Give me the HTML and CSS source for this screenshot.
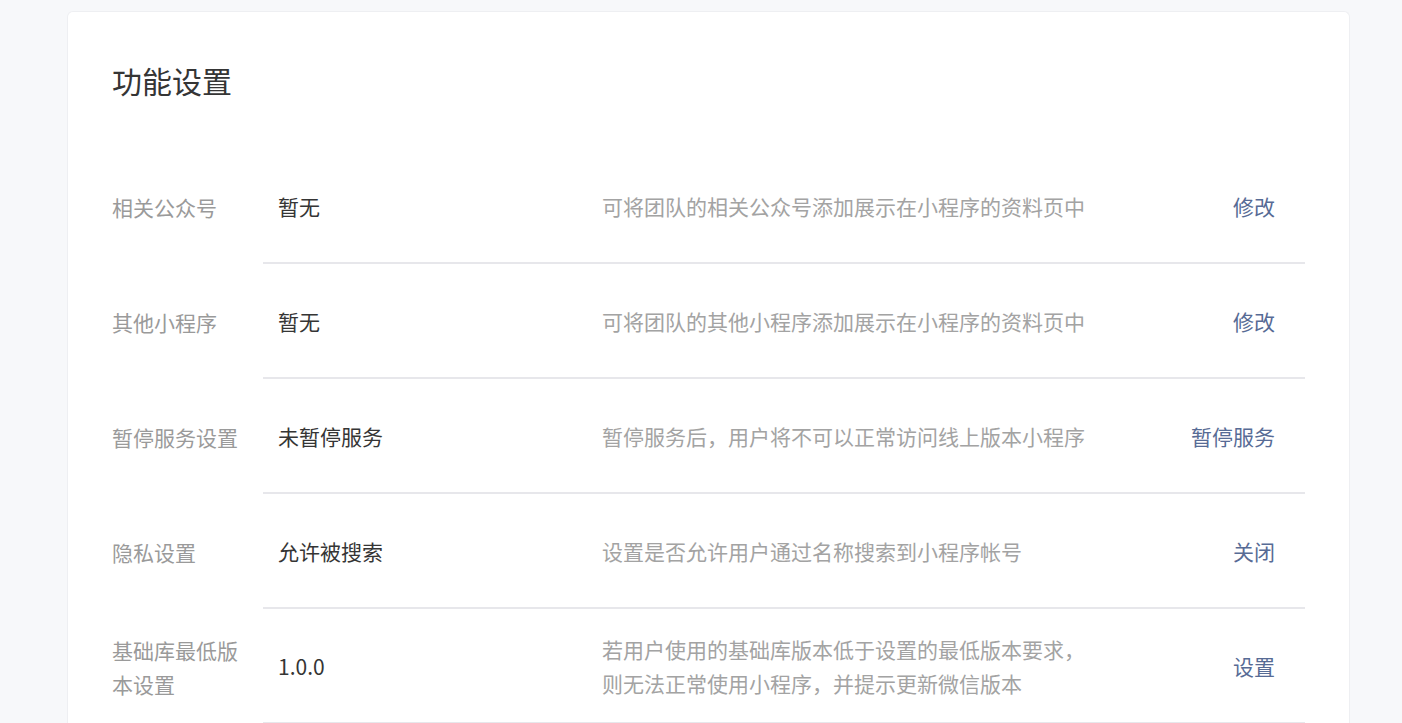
FILE: index.html
```html
<!DOCTYPE html>
<html lang="zh-CN">
<head>
<meta charset="utf-8">
<title>功能设置</title>
<link rel="stylesheet" href="styles.css">
</head>
<body>
<div class="page">
  <div class="card">
    <h2 class="title">功能设置</h2>
    <div class="list">
      <div class="row">
        <div class="label">相关公众号</div>
        <div class="body">
          <div class="value">暂无</div>
          <div class="desc">可将团队的相关公众号添加展示在小程序的资料页中</div>
          <a class="action">修改</a>
        </div>
      </div>
      <div class="row">
        <div class="label">其他小程序</div>
        <div class="body">
          <div class="value">暂无</div>
          <div class="desc">可将团队的其他小程序添加展示在小程序的资料页中</div>
          <a class="action">修改</a>
        </div>
      </div>
      <div class="row">
        <div class="label">暂停服务设置</div>
        <div class="body">
          <div class="value">未暂停服务</div>
          <div class="desc">暂停服务后，用户将不可以正常访问线上版本小程序</div>
          <a class="action">暂停服务</a>
        </div>
      </div>
      <div class="row">
        <div class="label">隐私设置</div>
        <div class="body">
          <div class="value">允许被搜索</div>
          <div class="desc">设置是否允许用户通过名称搜索到小程序帐号</div>
          <a class="action">关闭</a>
        </div>
      </div>
      <div class="row">
        <div class="label">基础库最低版本设置</div>
        <div class="body">
          <div class="value">1.0.0</div>
          <div class="desc">若用户使用的基础库版本低于设置的最低版本要求，则无法正常使用小程序，并提示更新微信版本</div>
          <a class="action">设置</a>
        </div>
      </div>
    </div>
  </div>
</div>
</body>
</html>
```

FILE: styles.css
```css
html, body {
  margin: 0;
  padding: 0;
}
body {
  background: #f7f8fa;
  font-family: "Noto Sans CJK SC", "Noto Sans", sans-serif;
  font-size: 21px;
  color: #353535;
}
.page {
  padding: 11px 52px 0 67px;
}
.card {
  background: #fff;
  border: 1px solid #eeeff2;
  border-bottom: none;
  border-radius: 6px 6px 0 0;
  padding: 44px 44px 0 44px;
  min-height: 700px;
  box-sizing: border-box;
}
.title {
  margin: 0;
  font-size: 30px;
  font-weight: normal;
  line-height: 48px;
  color: #353535;
}
.list {
  margin-top: 45px;
}
.row {
  display: flex;
}
.label {
  width: 151px;
  flex: none;
  box-sizing: border-box;
  padding-right: 20px;
  color: #9a9a9a;
  line-height: 34px;
  display: flex;
  align-items: center;
}
.body {
  flex: 1;
  display: flex;
  align-items: center;
  height: 113px;
  border-bottom: 2px solid #e7e7eb;
  padding: 0 30px 0 15px;
}
.value {
  width: 324px;
  flex: none;
  color: #353535;
}
.desc {
  width: 492px;
  flex: none;
  color: #a3a3a3;
  line-height: 34px;
}
.action {
  margin-left: auto;
  color: #576b95;
  cursor: pointer;
}
```
